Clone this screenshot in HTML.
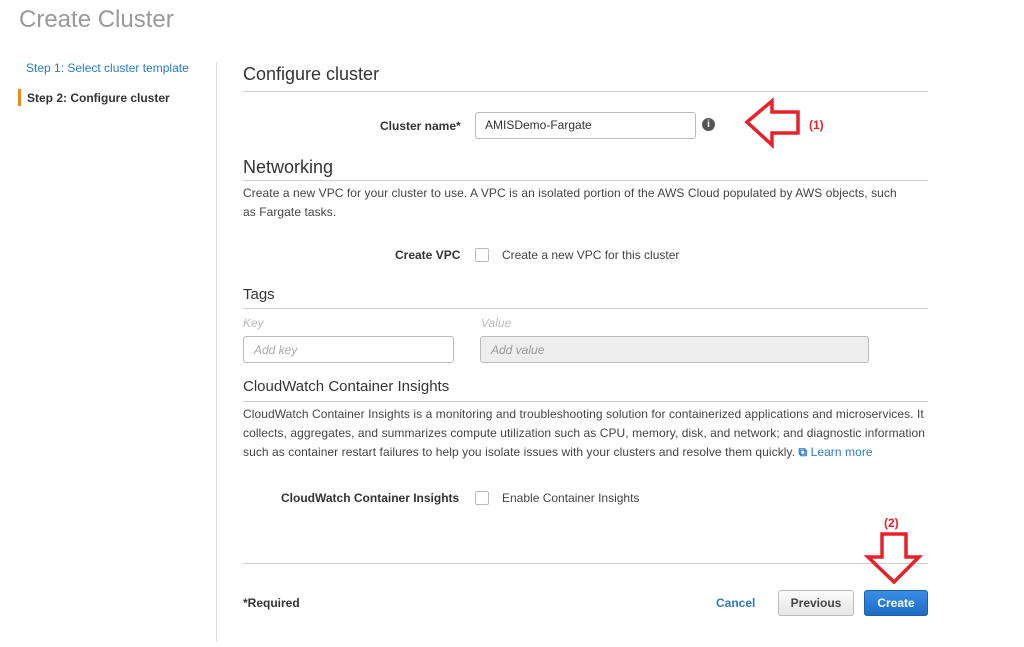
<!DOCTYPE html>
<html><head><style>
body{margin:0;width:1024px;height:647px;background:#fff;font-family:"Liberation Sans",Arial,sans-serif;position:relative;overflow:hidden;color:#333}
.a{position:absolute;white-space:nowrap}
.h{font-size:18px;color:#333}
.line{position:absolute;left:243px;width:685px;height:1px;background:#ccc}
.p{font-size:12px;color:#444;line-height:19px;letter-spacing:0.07px}
.inp{position:absolute;border:1px solid #bbb;border-radius:3px;background:#fff;box-sizing:border-box}
.cb{position:absolute;width:12px;height:12px;border:1px solid #bbb;border-radius:2px;background:#fff}
.lbl{font-size:12px;font-weight:bold;color:#333}
</style></head><body>
<div class="a" style="left:19px;top:6px;font-size:24px;color:#999">Create Cluster</div>
<div class="a" style="left:26px;top:61px;font-size:12px;color:#2b7bc4">Step 1: Select cluster template</div>
<div style="position:absolute;left:18px;top:89px;width:3px;height:17px;background:#e88a1a"></div>
<div class="a" style="left:27px;top:91px;font-size:12px;font-weight:bold;color:#333">Step 2: Configure cluster</div>
<div style="position:absolute;left:216px;top:62px;width:1px;height:580px;background:#ddd"></div>

<div class="a h" style="left:243px;top:64px">Configure cluster</div>
<div class="line" style="top:91px"></div>
<div class="a lbl" style="left:380px;top:119px">Cluster name*</div>
<div class="inp" style="left:475px;top:112px;width:221px;height:27px"></div>
<div class="a" style="left:485px;top:118px;font-size:12px;color:#333">AMISDemo-Fargate</div>
<div style="position:absolute;left:702px;top:118px;width:13px;height:13px;border-radius:50%;background:#555;color:#fff;font-size:10px;font-weight:bold;text-align:center;line-height:13px">i</div>

<div class="a h" style="left:243px;top:157px">Networking</div>
<div class="line" style="top:180px"></div>
<div class="a p" style="left:243px;top:184px">Create a new VPC for your cluster to use. A VPC is an isolated portion of the AWS Cloud populated by AWS objects, such</div>
<div class="a p" style="left:243px;top:203px">as Fargate tasks.</div>
<div class="a lbl" style="left:395px;top:248px">Create VPC</div>
<div class="cb" style="left:475px;top:248px"></div>
<div class="a" style="left:502px;top:248px;font-size:12px;color:#444">Create a new VPC for this cluster</div>

<div class="a" style="left:243px;top:286px;font-size:15px;color:#333">Tags</div>
<div class="line" style="top:308px"></div>
<div class="a" style="left:243px;top:316px;font-size:12px;font-style:italic;color:#bbb">Key</div>
<div class="a" style="left:481px;top:316px;font-size:12px;font-style:italic;color:#bbb">Value</div>
<div class="inp" style="left:243px;top:336px;width:211px;height:27px"></div>
<div class="a" style="left:254px;top:343px;font-size:12px;font-style:italic;color:#aaa">Add key</div>
<div class="inp" style="left:480px;top:336px;width:389px;height:27px;background:#eee"></div>
<div class="a" style="left:491px;top:343px;font-size:12px;font-style:italic;color:#999">Add value</div>

<div class="a" style="left:243px;top:378px;font-size:15px;color:#333">CloudWatch Container Insights</div>
<div class="line" style="top:401px"></div>
<div class="a p" style="left:243px;top:405px">CloudWatch Container Insights is a monitoring and troubleshooting solution for containerized applications and microservices. It</div>
<div class="a p" style="left:243px;top:424px">collects, aggregates, and summarizes compute utilization such as CPU, memory, disk, and network; and diagnostic information</div>
<div class="a p" style="left:243px;top:443px">such as container restart failures to help you isolate issues with your clusters and resolve them quickly. <span style="color:#2b7bc4;font-weight:bold">&#x29C9;</span><span style="color:#2b7bc4"> Learn more</span></div>
<div class="a lbl" style="left:281px;top:491px">CloudWatch Container Insights</div>
<div class="cb" style="left:475px;top:491px"></div>
<div class="a" style="left:502px;top:491px;font-size:12px;color:#444">Enable Container Insights</div>

<div class="line" style="top:563px"></div>
<div class="a lbl" style="left:243px;top:596px">*Required</div>
<div class="a" style="left:716px;top:596px;font-size:12px;font-weight:bold;color:#2b7bc4">Cancel</div>
<div style="position:absolute;left:778px;top:590px;width:76px;height:26px;border:1px solid #bbb;border-radius:3px;background:linear-gradient(#fafafa,#e6e6e6);box-sizing:border-box;text-align:center;line-height:24px;font-size:12px;font-weight:bold;color:#444">Previous</div>
<div style="position:absolute;left:864px;top:590px;width:64px;height:26px;border:1px solid #1a5fa8;border-radius:3px;background:linear-gradient(#3a8ee6,#1d6cc4);box-sizing:border-box;text-align:center;line-height:24px;font-size:12px;font-weight:bold;color:#fff">Create</div>

<svg style="position:absolute;left:0;top:0" width="1024" height="647">
<polygon points="747,122 772,101 772,112 798,112 798,133 772,133 772,145" fill="none" stroke="#e8202a" stroke-width="3.5" stroke-linejoin="miter"/>
<polygon points="882,534 906,534 906,557 919,557 894,582 868,557 882,557" fill="none" stroke="#e8202a" stroke-width="3.5"/>
<text x="809" y="129" font-family="Liberation Sans" font-size="12" font-weight="bold" fill="#e8202a">(1)</text>
<text x="884" y="527" font-family="Liberation Sans" font-size="12" font-weight="bold" fill="#e8202a">(2)</text>
</svg>
</body></html>
